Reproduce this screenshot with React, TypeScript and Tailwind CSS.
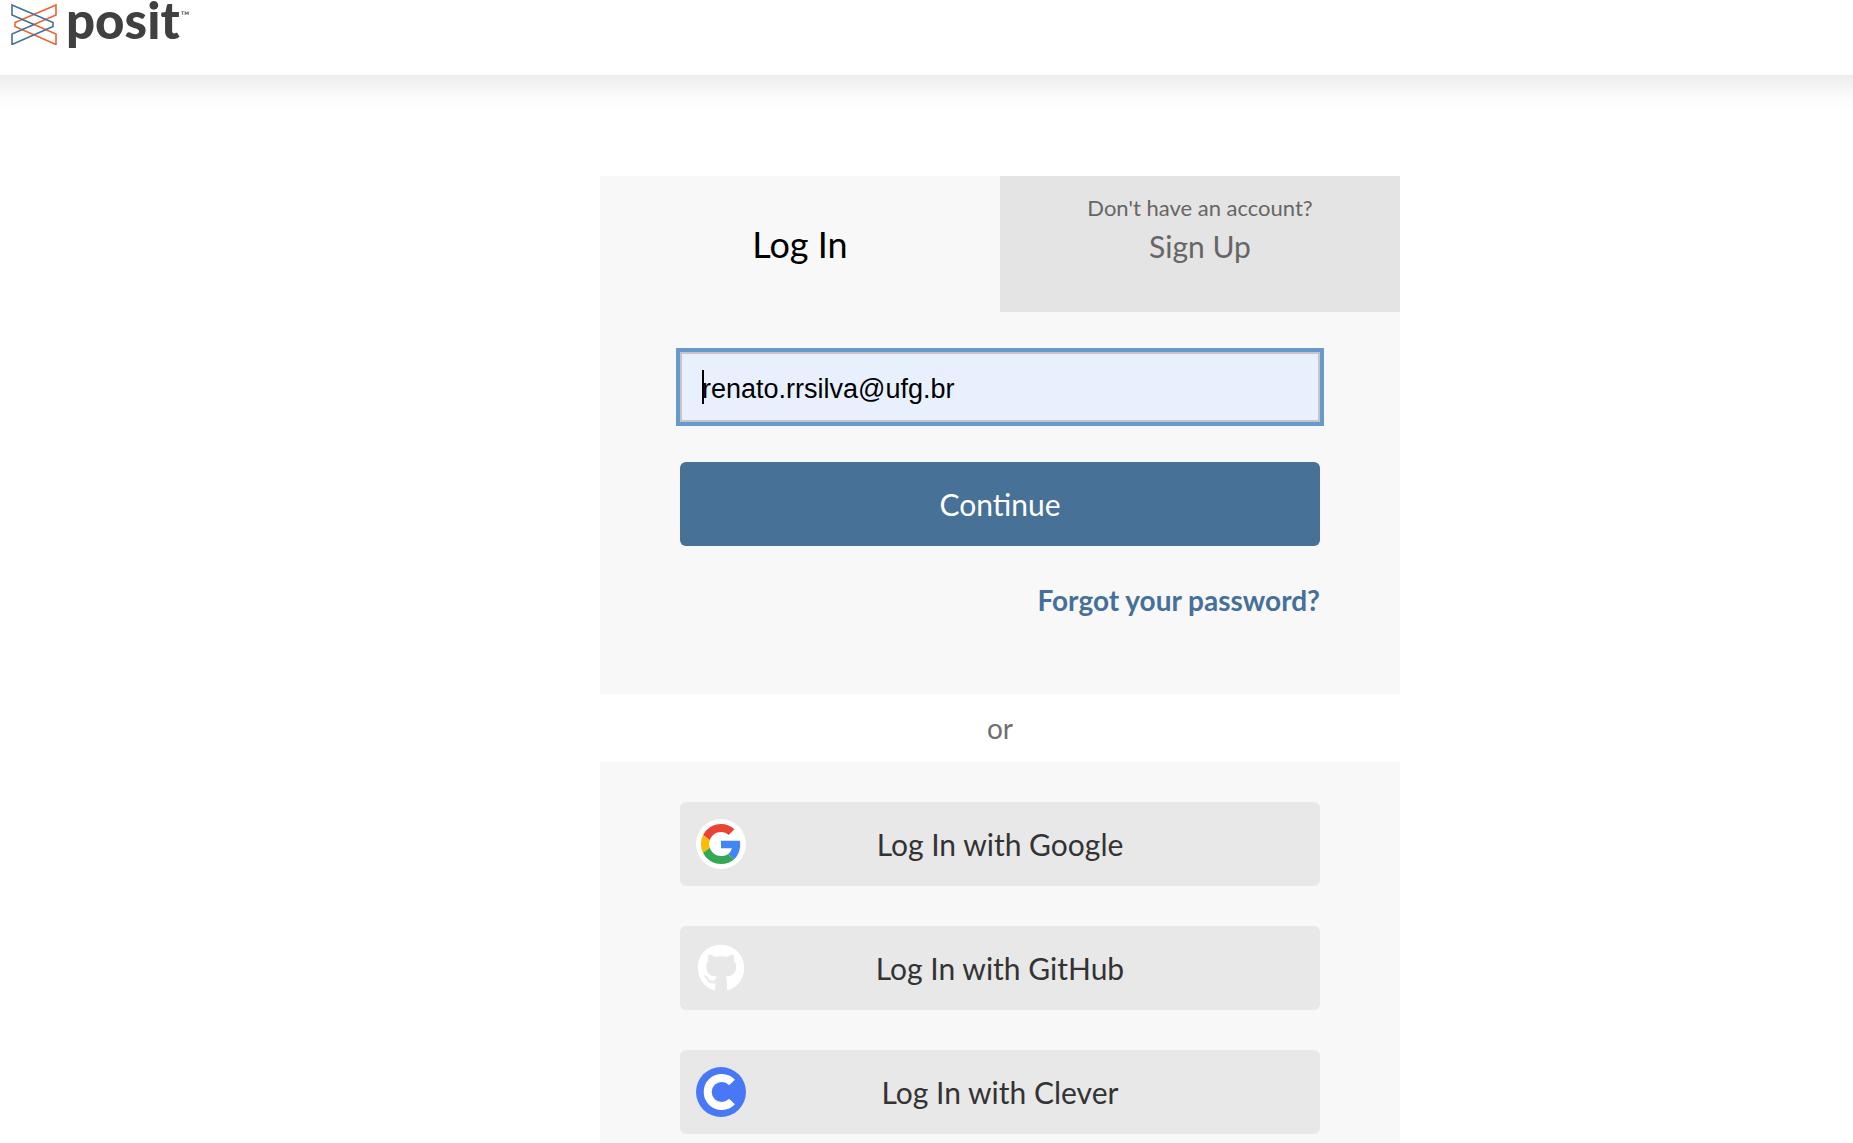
import { FaGithub } from "react-icons/fa";
import type { ReactNode } from "react";

function PositMark() {
  return (
    <svg viewBox="0 0 46 42" className="h-[42px] w-[46px]" fill="none" strokeWidth="1.6" aria-hidden="true">
      <path d="M45 2 L4 19.5 V23.5 L45 41.5 V31 L23 21.5 L45 12 Z" stroke="#ee6331" />
      <path d="M1 2 L42 19.5 V23.5 L1 41.5 V31 L23 21.5 L1 12 Z" stroke="#447099" />
    </svg>
  );
}

function GoogleIcon() {
  return (
    <span className="flex size-[50px] items-center justify-center rounded-full bg-white">
      <svg viewBox="0 0 48 48" className="size-10" aria-hidden="true">
        <path fill="#EA4335" d="M24 9.5c3.54 0 6.71 1.22 9.21 3.6l6.85-6.85C35.9 2.38 30.47 0 24 0 14.62 0 6.51 5.38 2.56 13.22l7.98 6.19C12.43 13.72 17.74 9.5 24 9.5z" />
        <path fill="#4285F4" d="M46.98 24.55c0-1.57-.15-3.09-.38-4.55H24v9.02h12.94c-.58 2.96-2.26 5.48-4.78 7.18l7.73 6c4.51-4.18 7.09-10.36 7.09-17.65z" />
        <path fill="#FBBC05" d="M10.53 28.59c-.48-1.45-.76-2.99-.76-4.59s.27-3.14.76-4.59l-7.98-6.19C.92 16.46 0 20.12 0 24c0 3.88.92 7.54 2.56 10.78l7.97-6.19z" />
        <path fill="#34A853" d="M24 48c6.48 0 11.93-2.13 15.89-5.81l-7.73-6c-2.15 1.45-4.92 2.3-8.16 2.3-6.26 0-11.57-4.22-13.47-9.91l-7.98 6.19C6.51 42.62 14.62 48 24 48z" />
      </svg>
    </span>
  );
}

function CleverIcon() {
  return (
    <svg viewBox="0 0 50 50" className="size-[50px]" aria-hidden="true">
      <circle cx="25" cy="25" r="25" fill="#4878f5" />
      <path d="M36 15.5 A14 14 0 1 0 36 34.5" fill="none" stroke="#fff" strokeWidth="8" />
    </svg>
  );
}

function ProviderButton({ icon, children }: { icon: ReactNode; children: ReactNode }) {
  return (
    <button type="button" className="relative h-[84px] w-full rounded-md bg-[#e8e8e8] text-[30px] text-[#333333]">
      <span className="absolute inset-y-0 left-4 flex w-[50px] items-center justify-center">{icon}</span>
      {children}
    </button>
  );
}

export default function App() {
  return (
    <div className="h-screen overflow-hidden bg-white font-['Lato',sans-serif]">
      <header className="-mx-10 flex h-[75px] items-start px-[51px] shadow-[0_0_40px_rgba(0,0,0,0.15)]">
        <a href="#" className="flex items-start text-[#404041]" aria-label="posit">
          <span className="pt-[3px]"><PositMark /></span>
          <span className="pl-[9px] text-[51px] leading-10 font-black">posit</span>
          <span className="pt-2.5 pl-px text-[12px] leading-3">™</span>
        </a>
      </header>
      <main className="flex justify-center pt-[101px] pl-[147px]">
        <div className="w-[800px]">
          <section className="bg-[#f8f8f8] pb-[75px]">
            <div className="grid grid-cols-2">
              <button type="button" className="h-[136px] text-[36px] text-black">Log In</button>
              <button type="button" className="flex h-[136px] flex-col items-center bg-[#e4e4e4] pt-4 text-[#666666]">
                <span className="text-[22px] leading-8">Don't have an account?</span>
                <span className="text-[30px] leading-[45px]">Sign Up</span>
              </button>
            </div>
            <form className="px-20 pt-10" onSubmit={(e) => e.preventDefault()}>
              <div className="relative">
                <input
                  type="email"
                  aria-label="Email"
                  defaultValue="renato.rrsilva@ufg.br"
                  className="h-[70px] w-full border-2 border-[#c6c6c6] bg-[#e8f0fe] px-5 pt-1 font-['Liberation_Sans',sans-serif] text-[27px] text-black outline-4 outline-[#6699cc]"
                />
                <span className="absolute top-[18px] left-[22px] h-[34px] w-0.5 bg-black" />
              </div>
              <button type="submit" className="mt-10 h-[84px] w-full rounded-md bg-[#477197] text-[30px] text-white">Continue</button>
              <div className="mt-[35px] text-right text-[28px] leading-[38px]">
                <a href="#" className="font-bold text-[#447099]">Forgot your password?</a>
              </div>
            </form>
          </section>
          <p className="h-[68px] text-center text-[28px] leading-[68px] text-[#707070]">or</p>
          <section className="flex flex-col gap-10 bg-[#f8f8f8] px-20 py-10">
            <ProviderButton icon={<GoogleIcon />}>Log In with Google</ProviderButton>
            <ProviderButton icon={<FaGithub className="size-12 text-white" />}>Log In with GitHub</ProviderButton>
            <ProviderButton icon={<CleverIcon />}>Log In with Clever</ProviderButton>
          </section>
        </div>
      </main>
    </div>
  );
}
